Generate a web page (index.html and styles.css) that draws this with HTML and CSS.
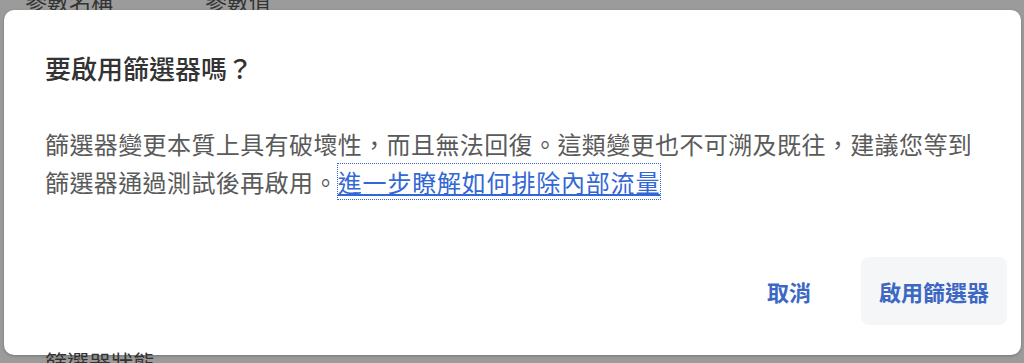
FILE: index.html
```html
<!DOCTYPE html>
<html lang="zh-Hant">
<head>
    <meta charset="UTF-8">
    <meta name="viewport" content="width=device-width, initial-scale=1.0">
    <title>啟用篩選器</title>
    <link rel="stylesheet" href="styles.css">
</head>
<body>
    <!-- page behind the modal -->
    <div class="bg-head">
        <span class="bg-col first">參數名稱</span>
        <span class="bg-col">參數值</span>
    </div>

    <div class="dialog">
        <h2 class="dialog-title">要啟用篩選器嗎？</h2>
        <p class="dialog-text">篩選器變更本質上具有破壞性，而且無法回復。這類變更也不可溯及既往，建議您等到篩選器通過測試後再啟用。<a href="#" class="learn-link">進一步瞭解如何排除內部流量</a></p>
        <div class="dialog-actions">
            <button type="button" class="action-btn">取消</button>
            <button type="button" class="action-btn primary">啟用篩選器</button>
        </div>
    </div>

    <div class="bg-foot">篩選器狀態</div>
</body>
</html>
```

FILE: styles.css
```css
body {
    margin: 0;
    background-color: #9b9b9b;
    font-family: "Noto Sans CJK TC", "Noto Sans", sans-serif;
    height: 363px;
    overflow: hidden;
}

.bg-head {
    height: 10px;
    overflow: hidden;
    display: flex;
    align-items: flex-end;
    padding-left: 25px;
    color: #333;
    font-size: 22px;
}

.bg-col {
    line-height: 22px;
    margin-bottom: -1px;
}

.bg-col.first {
    width: 180px;
}

.dialog {
    background-color: #fff;
    margin: 0 3px 0 4px;
    height: 345px;
    box-sizing: border-box;
    border-radius: 10px;
    padding: 40px 36px 0 41px;
    display: flex;
    flex-direction: column;
    box-shadow: 0 1px 3px rgba(0,0,0,0.25);
}

.dialog-title {
    margin: 0;
    font-size: 26px;
    line-height: 36px;
    font-weight: 500;
    color: #333;
}

.dialog-text {
    margin: 39px 0 0 0;
    font-size: 24px;
    line-height: 38px;
    letter-spacing: 0.4px;
    color: #5a5a5a;
    width: 940px;
}

.learn-link {
    color: #3367d6;
    text-decoration: underline;
    letter-spacing: 0.8px;
    outline: 1px dotted #3367d6;
}

.dialog-actions {
    margin-top: auto;
    margin-right: -22px;
    margin-bottom: 30px;
    display: flex;
    justify-content: flex-end;
    gap: 32px;
}

.action-btn {
    font-family: inherit;
    font-size: 22px;
    font-weight: 600;
    color: #3c68c4;
    background: none;
    border: none;
    border-radius: 8px;
    height: 68px;
    padding: 0 18px;
    cursor: pointer;
}

.action-btn.primary {
    background-color: #f5f6f8;
}

.bg-foot {
    padding-left: 45px;
    color: #333;
    font-size: 22px;
    line-height: 22px;
    margin-top: -5px;
}
```
